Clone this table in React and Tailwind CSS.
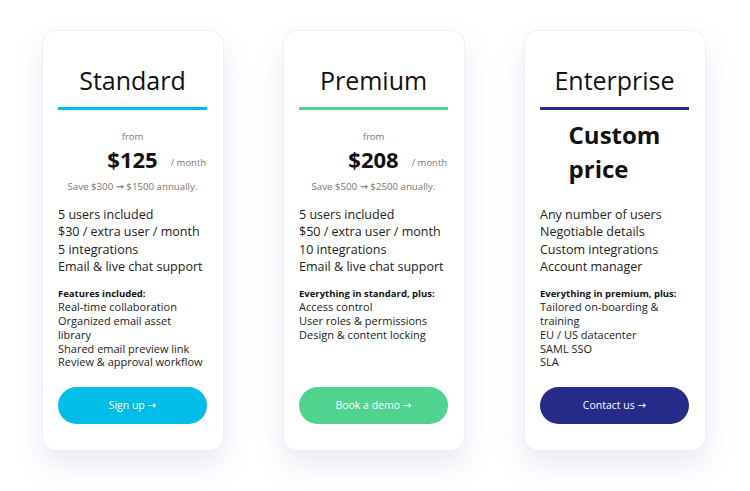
import React from "react";

const font = { fontFamily: '"Open Sans", "DejaVu Sans", sans-serif' };

function Card({ title, lineClass, price, main, subTitle, features, btnLabel, btnClass }) {
  return (
    <div className="flex h-[421px] w-[182px] flex-col rounded-[14px] border border-[#eef0f6] bg-white pl-[15px] pr-[16px] shadow-[0_14px_28px_rgba(120,130,190,0.16)]">
      <div className="pt-[34px] text-center text-[25px] leading-[30px] text-[#111]">{title}</div>
      <div className={`mt-[12px] h-[3px] w-full ${lineClass}`} />
      <div className="h-[96px]">{price}</div>
      <ul className="text-[12.5px] leading-[17.3px] text-[#222]">
        {main.map((m) => (
          <li key={m}>{m}</li>
        ))}
      </ul>
      <div className="mt-[12px] text-[9.5px] font-bold leading-[13px] text-[#111]">{subTitle}</div>
      <ul className="max-w-[146px] text-[11px] leading-[13.8px] text-[#222]">
        {features.map((f) => (
          <li key={f}>{f}</li>
        ))}
      </ul>
      <button className={`mt-auto mb-[26px] h-[37px] w-full rounded-full text-[10.5px] font-medium text-white ${btnClass}`}>
        {btnLabel}
      </button>
    </div>
  );
}

function Price({ amount, save }) {
  return (
    <div className="flex flex-col items-center">
      <div className="mt-[21px] text-[9.5px] leading-[12px] text-[#777]">from</div>
      <div className="relative mt-[5px]">
        <div className="text-[22px] font-bold leading-[22px] text-[#111]">{amount}</div>
        <div className="absolute bottom-[1px] left-full ml-[13px] whitespace-nowrap text-[9.5px] leading-[12px] text-[#777]">
          / month
        </div>
      </div>
      <div className="mt-[11px] text-[9.7px] leading-[12px] text-[#777]">{save}</div>
    </div>
  );
}

export default function App() {
  return (
    <div className="min-h-[491px] w-[750px] bg-white" style={font}>
      <div className="flex gap-[59px] pl-[42px] pt-[30px]">
        <Card
          title="Standard"
          lineClass="bg-[#00bde8]"
          price={<Price amount="$125" save="Save $300 → $1500 annually." />}
          main={["5 users included", "$30 / extra user / month", "5 integrations", "Email & live chat support"]}
          subTitle="Features included:"
          features={[
            "Real-time collaboration",
            "Organized email asset library",
            "Shared email preview link",
            "Review & approval workflow",
          ]}
          btnLabel="Sign up →"
          btnClass="bg-[#00bde8]"
        />
        <Card
          title="Premium"
          lineClass="bg-[#4fd38f]"
          price={<Price amount="$208" save="Save $500 → $2500 anually." />}
          main={["5 users included", "$50 / extra user / month", "10 integrations", "Email & live chat support"]}
          subTitle="Everything in standard, plus:"
          features={["Access control", "User roles & permissions", "Design & content locking"]}
          btnLabel="Book a demo →"
          btnClass="bg-[#4fd38f]"
        />
        <Card
          title="Enterprise"
          lineClass="bg-[#262a88]"
          price={
            <div className="mx-auto mt-[8px] w-fit text-left text-[24px] font-bold leading-[34px] text-[#111]">
              Custom
              <br />
              price
            </div>
          }
          main={["Any number of users", "Negotiable details", "Custom integrations", "Account manager"]}
          subTitle="Everything in premium, plus:"
          features={["Tailored on-boarding & training", "EU / US datacenter", "SAML SSO", "SLA"]}
          btnLabel="Contact us →"
          btnClass="bg-[#262a88]"
        />
      </div>
    </div>
  );
}
